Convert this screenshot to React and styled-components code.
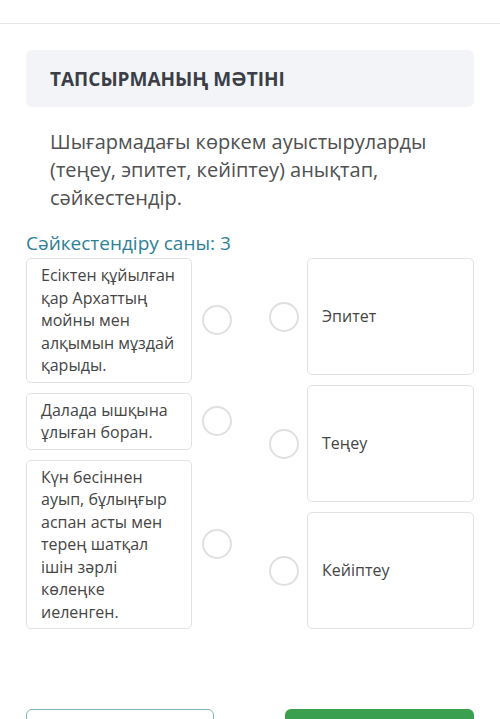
import React from 'react';
import styled, { createGlobalStyle } from 'styled-components';

const GlobalStyle = createGlobalStyle`
  html, body {
    margin: 0;
    padding: 0;
    background: #fff;
    font-family: 'Open Sans', 'Noto Sans', sans-serif;
    color: #444;
  }
  * { box-sizing: border-box; }
`;

const leftItems = [
  'Есіктен құйылған қар Архаттың мойны мен алқымын мұздай қарыды.',
  'Далада ышқына ұлыған боран.',
  'Күн бесіннен ауып, бұлыңғыр аспан асты мен терең шатқал ішін зәрлі көлеңке иеленген.',
];

const rightItems = ['Эпитет', 'Теңеу', 'Кейіптеу'];

const App = () => (
  <Page>
    <GlobalStyle />
    <TopBar />
    <Content>
      <TitleBox>ТАПСЫРМАНЫҢ МӘТІНІ</TitleBox>
      <Question>
        Шығармадағы көркем ауыстыруларды (теңеу, эпитет, кейіптеу) анықтап,
        сәйкестендір.
      </Question>
      <Counter>Сәйкестендіру саны: 3</Counter>
      <MatchGrid>
        <Column>
          {leftItems.map((text) => (
            <LeftRow key={text}>
              <Card>{text}</Card>
              <Radio />
            </LeftRow>
          ))}
        </Column>
        <Column>
          {rightItems.map((text) => (
            <RightRow key={text}>
              <Radio />
              <Card $centered>{text}</Card>
            </RightRow>
          ))}
        </Column>
      </MatchGrid>
      <Footer>
        <OutlineButton />
        <PrimaryButton />
      </Footer>
    </Content>
  </Page>
);

export default App;

const Page = styled.div`
  width: 500px;
  height: 719px;
  overflow: hidden;
`;

const TopBar = styled.div`
  height: 24px;
  border-bottom: 1px solid #e6e6e6;
`;

const Content = styled.div`
  padding: 26px 26px 0;
`;

const TitleBox = styled.div`
  height: 57px;
  background: #f3f4f7;
  border-radius: 6px;
  padding: 0 24px;
  display: flex;
  align-items: center;
  font-size: 19px;
  font-weight: 700;
  color: #3b3e47;
`;

const Question = styled.p`
  margin: 21px 0 0;
  padding: 0 24px;
  font-size: 20px;
  line-height: 28px;
  color: #505050;
`;

const Counter = styled.div`
  margin-top: 19px;
  font-size: 19px;
  line-height: 24px;
  color: #2e7f98;
`;

const MatchGrid = styled.div`
  margin-top: 3px;
  display: grid;
  grid-template-columns: 206px 205px;
  column-gap: 37px;
`;

const Column = styled.div`
  display: flex;
  flex-direction: column;
  gap: 10px;
`;

const LeftRow = styled.div`
  display: grid;
  grid-template-columns: 166px 30px;
  column-gap: 10px;
  align-items: center;
`;

const RightRow = styled.div`
  flex: 1;
  display: grid;
  grid-template-columns: 30px 167px;
  column-gap: 8px;
  align-items: center;
`;

const Card = styled.div`
  align-self: stretch;
  border: 1px solid #e2e2e2;
  border-radius: 5px;
  padding: 5px 14px;
  font-size: 16px;
  line-height: 22.5px;
  color: #454545;
  display: flex;
  align-items: ${(p) => (p.$centered ? 'center' : 'flex-start')};
`;

const Radio = styled.span`
  width: 30px;
  height: 30px;
  border-radius: 50%;
  border: 2px solid #e0e0e0;
`;

const Footer = styled.div`
  margin-top: 80px;
  display: flex;
  justify-content: space-between;
`;

const OutlineButton = styled.div`
  width: 188px;
  height: 42px;
  border: 1.5px solid #86b3b8;
  border-radius: 6px;
`;

const PrimaryButton = styled.div`
  width: 189px;
  height: 42px;
  background: #3a9f4f;
  border-radius: 6px;
`;
